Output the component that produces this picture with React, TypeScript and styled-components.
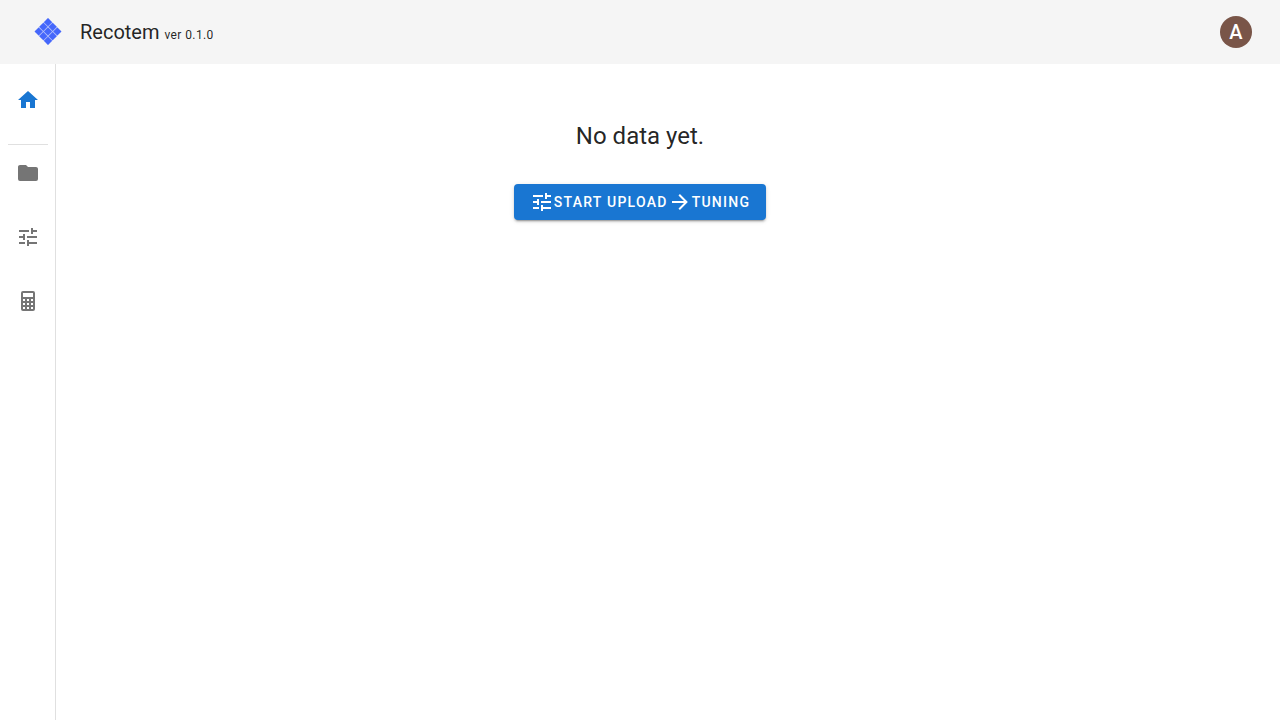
import React from "react";
import styled, { createGlobalStyle } from "styled-components";

const GlobalStyle = createGlobalStyle`
  *, *::before, *::after { box-sizing: border-box; }
  body {
    margin: 0;
    background: #ffffff;
    color: rgba(0, 0, 0, 0.87);
    font-family: Roboto, "Liberation Sans", sans-serif;
    font-size: 16px;
    line-height: 24px;
  }
`;

const paths = {
  home: "M10,20V14H14V20H19V12H22L12,3L2,12H5V20H10Z",
  folder:
    "M10,4H4C2.89,4 2,4.89 2,6V18A2,2 0 0,0 4,20H20A2,2 0 0,0 22,18V8C22,6.89 21.1,6 20,6H12L10,4Z",
  tune: "M3,17V19H9V17H3M3,5V7H13V5H3M13,21V19H21V17H13V15H11V21H13M7,9V11H3V13H7V15H9V9H7M21,13V11H11V13H21M15,9H17V7H21V5H17V3H15V9Z",
  calculator:
    "M7,2H17A2,2 0 0,1 19,4V20A2,2 0 0,1 17,22H7A2,2 0 0,1 5,20V4A2,2 0 0,1 7,2M7,4V8H17V4H7M7,10V12H9V10H7M11,10V12H13V10H11M15,10V12H17V10H15M7,14V16H9V14H7M11,14V16H13V14H11M15,14V16H17V14H15M7,18V20H9V18H7M11,18V20H13V18H11M15,18V20H17V18H15Z",
  arrowRight:
    "M4,11V13H16L10.5,18.5L11.92,19.92L19.84,12L11.92,4.08L10.5,5.5L16,11H4Z",
};

const IconSvg = styled.svg`
  width: 24px;
  height: 24px;
  flex: none;
  fill: currentColor;
`;

const Icon = ({ name }: { name: keyof typeof paths }) => (
  <IconSvg viewBox="0 0 24 24" aria-hidden="true">
    <path d={paths[name]} />
  </IconSvg>
);

const Page = styled.div`
  display: flex;
  flex-direction: column;
  min-height: 100vh;
`;

const AppBar = styled.header`
  display: flex;
  align-items: center;
  justify-content: space-between;
  height: 64px;
  padding: 0 28px 0 32px;
  background: #f5f5f5;
`;

const Brand = styled.a`
  display: flex;
  align-items: center;
  gap: 16px;
  color: inherit;
  text-decoration: none;
`;

const LogoSvg = styled.svg`
  width: 32px;
  height: 32px;
`;

const Title = styled.span`
  font-size: 20px;
  line-height: 32px;
`;

const Version = styled.span`
  font-size: 12px;
  line-height: 20px;
  letter-spacing: 0.0333em;
`;

const Avatar = styled.button`
  display: flex;
  align-items: center;
  justify-content: center;
  width: 32px;
  height: 32px;
  padding: 0;
  border: 0;
  border-radius: 50%;
  background: #795548;
  color: #ffffff;
  font: 500 20px/32px Roboto, "Liberation Sans", sans-serif;
  cursor: pointer;
`;

const Body = styled.div`
  display: flex;
  flex: 1;
`;

const Rail = styled.nav`
  flex: none;
  width: 56px;
  padding: 8px 0;
  border-right: 1px solid #e0e0e0;
`;

const RailGroup = styled.ul`
  display: flex;
  flex-direction: column;
  gap: 8px;
  margin: 0;
  padding: 0;
  list-style: none;
`;

const RailDivider = styled.hr`
  width: 40px;
  height: 1px;
  margin: 16px 0 0 8px;
  border: 0;
  background: #e0e0e0;
`;

const RailLink = styled.a<{ $active?: boolean }>`
  display: flex;
  align-items: center;
  height: 56px;
  padding: 0 16px;
  color: ${({ $active }) => ($active ? "#1976d2" : "#757575")};
`;

const Main = styled.main`
  display: flex;
  flex: 1;
  flex-direction: column;
  align-items: center;
  gap: 32px;
  padding: 56px 56px 56px 0;
`;

const Heading = styled.h1`
  margin: 0;
  font-size: 24px;
  font-weight: 400;
  line-height: 32px;
`;

const StartButton = styled.button`
  display: flex;
  align-items: center;
  height: 36px;
  padding: 0 16px;
  border: 0;
  border-radius: 4px;
  background: #1976d2;
  box-shadow: 0 3px 1px -2px rgba(0, 0, 0, 0.2),
    0 2px 2px 0 rgba(0, 0, 0, 0.14), 0 1px 5px 0 rgba(0, 0, 0, 0.12);
  color: #ffffff;
  font: 500 14px/20px Roboto, "Liberation Sans", sans-serif;
  letter-spacing: 0.0893em;
  text-transform: uppercase;
  white-space: nowrap;
  cursor: pointer;
`;

const Logo = () => (
  <LogoSvg viewBox="0 0 32 32" aria-hidden="true">
    <g transform="translate(16 15.5) rotate(45)">
      <rect x="-9.5" y="-9.5" width="19" height="19" fill="#b4c1fb" />
      {[-9.5, -2.9, 3.7].map((y) =>
        [-9.5, -2.9, 3.7].map((x) => (
          <rect key={`${x},${y}`} x={x} y={y} width="5.8" height="5.8" fill="#4567fb" />
        ))
      )}
    </g>
  </LogoSvg>
);

const tools: { icon: keyof typeof paths; label: string }[] = [
  { icon: "folder", label: "Data" },
  { icon: "tune", label: "Tuning" },
  { icon: "calculator", label: "Models" },
];

export default function App() {
  return (
    <Page>
      <GlobalStyle />
      <AppBar>
        <Brand href="#home">
          <Logo />
          <Title>
            Recotem <Version>ver 0.1.0</Version>
          </Title>
        </Brand>
        <Avatar type="button">A</Avatar>
      </AppBar>
      <Body>
        <Rail>
          <RailGroup>
            <li>
              <RailLink href="#home" aria-label="Home" aria-current="page" $active>
                <Icon name="home" />
              </RailLink>
            </li>
          </RailGroup>
          <RailDivider />
          <RailGroup>
            {tools.map(({ icon, label }) => (
              <li key={icon}>
                <RailLink href={`#${icon}`} aria-label={label}>
                  <Icon name={icon} />
                </RailLink>
              </li>
            ))}
          </RailGroup>
        </Rail>
        <Main>
          <Heading>No data yet.</Heading>
          <StartButton type="button">
            <Icon name="tune" />
            Start upload
            <Icon name="arrowRight" />
            Tuning
          </StartButton>
        </Main>
      </Body>
    </Page>
  );
}
